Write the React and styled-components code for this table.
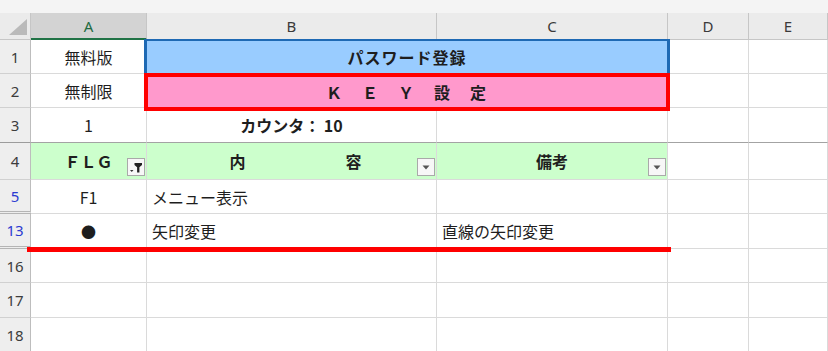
import React from 'react';
import styled, { createGlobalStyle } from 'styled-components';

const GlobalStyle = createGlobalStyle`
  html, body {
    margin: 0;
    padding: 0;
    background: #fff;
  }
  body {
    font-family: "Noto Sans CJK JP", "Noto Sans", sans-serif;
  }
`;

const COLS = '31px 116px 290px 231px 81px 1fr';
const GRID = '#dadada';
const HEAD_LINE = '#c6c6c6';

const Sheet = styled.div`
  position: relative;
  width: 828px;
  height: 351px;
  overflow: hidden;
  background: #fff;
`;

const TopStrip = styled.div`
  height: 13px;
  background: #f4f4f4;
`;

const Row = styled.div`
  display: grid;
  grid-template-columns: ${COLS};
  height: ${(p) => p.$h}px;
`;

const Corner = styled.div`
  display: flex;
  align-items: flex-end;
  justify-content: flex-end;
  padding: 0 3px 4px 0;
  background: #ebebeb;
  border-right: 1px solid ${HEAD_LINE};
  border-bottom: 1px solid ${HEAD_LINE};
`;

const CornerMark = styled.div`
  width: 0;
  height: 0;
  border-left: 18px solid transparent;
  border-bottom: 16px solid #bababa;
`;

const ColHead = styled.div`
  box-sizing: border-box;
  display: flex;
  align-items: center;
  justify-content: center;
  background: ${(p) => (p.$active ? '#d3d3d3' : '#ebebeb')};
  color: ${(p) => (p.$active ? '#1f6b42' : '#3a3a3a')};
  border-right: 1px solid ${HEAD_LINE};
  border-bottom: ${(p) => (p.$active ? '2px solid #217346' : `1px solid ${HEAD_LINE}`)};
  font-family: "Noto Sans", "Liberation Sans", sans-serif;
  font-size: 15px;
`;

const RowHead = styled.div`
  box-sizing: border-box;
  display: flex;
  align-items: center;
  justify-content: center;
  background: #eeeeee;
  border-right: 1px solid #bdbdbd;
  border-bottom: ${(p) =>
    p.$gap
      ? '3px double #b5b5b5'
      : `1px solid ${p.$freeze ? '#9c9c9c' : '#d0d0d0'}`};
  color: ${(p) => (p.$filtered ? '#2b3bd1' : '#3c3c3c')};
  font-family: "Noto Sans", "Liberation Sans", sans-serif;
  font-size: 15px;
`;

const Cell = styled.div`
  box-sizing: border-box;
  position: relative;
  display: flex;
  align-items: center;
  justify-content: ${(p) => (p.$left ? 'flex-start' : 'center')};
  padding-left: ${(p) => (p.$left ? '5px' : '0')};
  grid-column: span ${(p) => p.$span || 1};
  background: ${(p) => p.$fill || '#fff'};
  border-right: 1px solid ${GRID};
  border-bottom: 1px solid ${(p) => (p.$freeze ? '#a3a3a3' : GRID)};
  color: #1e1e1e;
  font-size: 16px;
  font-weight: ${(p) => (p.$bold ? 700 : 400)};
  letter-spacing: ${(p) => p.$spacing || 0}px;
  white-space: nowrap;
`;

const TitleCell = styled(Cell)`
  z-index: 1;
  margin: -1px -2px -1px -3px;
  background: #99ccff;
  border: 2px solid #1e69b4;
  border-left-width: 3px;
  border-right-width: 3px;
  font-weight: 700;
  letter-spacing: 1px;
`;

const KeyCell = styled(Cell)`
  z-index: 2;
  margin: -1px -2px -3px -3px;
  background: #ff99cc;
  border: 4px solid #ff0000;
  font-weight: 700;
  letter-spacing: 2px;
`;

const Spread = styled.span`
  display: flex;
  gap: ${(p) => p.$gap}px;
  padding-left: ${(p) => p.$shift || 0}px;
`;

const FilterButton = styled.div`
  position: absolute;
  right: 1px;
  bottom: 3px;
  width: 18px;
  height: 18px;
  box-sizing: border-box;
  display: flex;
  align-items: center;
  justify-content: center;
  background: #f7f7f7;
  border: 1px solid #a9a9a9;
`;

const Dot = styled.span`
  font-size: 15px;
  line-height: 1;
`;

const DrawnLine = styled.div`
  position: absolute;
  left: 27px;
  top: 247px;
  width: 644px;
  height: 5px;
  background: #ff0000;
  z-index: 3;
`;

function DropArrow() {
  return (
    <svg width="12" height="12" viewBox="0 0 12 12">
      <path d="M2.5 4.5 H9.5 L6 8.5 Z" fill="#555" />
    </svg>
  );
}

function FilterIcon() {
  return (
    <svg width="16" height="16" viewBox="0 0 16 16">
      <path d="M2 11 H5.5 L3.75 13 Z" fill="#333" />
      <path d="M6.5 4 H14 V6 L11.4 8.3 V13.5 H9.1 V8.3 L6.5 6 Z" fill="#222" />
    </svg>
  );
}

const COLUMNS = ['A', 'B', 'C', 'D', 'E'];

export default function App() {
  return (
    <>
      <GlobalStyle />
      <Sheet>
        <TopStrip />

        <Row $h={27}>
          <Corner>
            <CornerMark />
          </Corner>
          {COLUMNS.map((c) => (
            <ColHead key={c} $active={c === 'A'}>
              {c}
            </ColHead>
          ))}
        </Row>

        <Row $h={34}>
          <RowHead>1</RowHead>
          <Cell>無料版</Cell>
          <TitleCell $span={2}>パスワード登録</TitleCell>
          <Cell />
          <Cell />
        </Row>

        <Row $h={34}>
          <RowHead>2</RowHead>
          <Cell>無制限</Cell>
          <KeyCell $span={2}>Ｋ　Ｅ　Ｙ　設　定</KeyCell>
          <Cell />
          <Cell />
        </Row>

        <Row $h={35}>
          <RowHead $freeze>3</RowHead>
          <Cell $freeze>1</Cell>
          <Cell $freeze $bold>カウンタ： 10</Cell>
          <Cell $freeze />
          <Cell $freeze />
          <Cell $freeze />
        </Row>

        <Row $h={37}>
          <RowHead>4</RowHead>
          <Cell $fill="#ccffcc" $bold>
            ＦＬＧ
            <FilterButton>
              <FilterIcon />
            </FilterButton>
          </Cell>
          <Cell $fill="#ccffcc" $bold>
            <Spread $gap={100} $shift={8}>
              <span>内</span>
              <span>容</span>
            </Spread>
            <FilterButton>
              <DropArrow />
            </FilterButton>
          </Cell>
          <Cell $fill="#ccffcc" $bold>
            備考
            <FilterButton>
              <DropArrow />
            </FilterButton>
          </Cell>
          <Cell />
          <Cell />
        </Row>

        <Row $h={34}>
          <RowHead $filtered $gap>5</RowHead>
          <Cell>F1</Cell>
          <Cell $left>メニュー表示</Cell>
          <Cell />
          <Cell />
          <Cell />
        </Row>

        <Row $h={35}>
          <RowHead $filtered $gap>13</RowHead>
          <Cell>
            <Dot>●</Dot>
          </Cell>
          <Cell $left>矢印変更</Cell>
          <Cell $left>直線の矢印変更</Cell>
          <Cell />
          <Cell />
        </Row>

        {[
          ['16', 34],
          ['17', 35],
          ['18', 35],
        ].map(([n, h]) => (
          <Row key={n} $h={h}>
            <RowHead>{n}</RowHead>
            <Cell />
            <Cell />
            <Cell />
            <Cell />
            <Cell />
          </Row>
        ))}

        <DrawnLine />
      </Sheet>
    </>
  );
}
